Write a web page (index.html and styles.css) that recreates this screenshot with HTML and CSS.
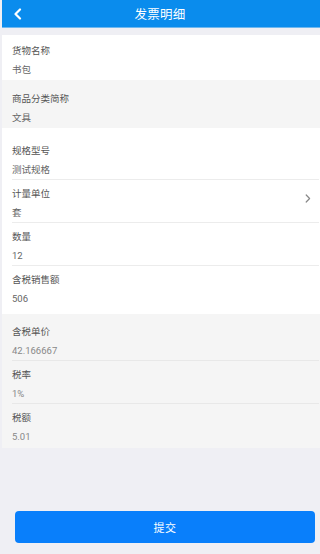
FILE: index.html
```html
<!DOCTYPE html>
<html lang="zh-CN">
<head>
<meta charset="utf-8">
<title>发票明细</title>
<link rel="stylesheet" href="styles.css">
</head>
<body>
<div class="page">
  <header class="topbar">
    <span class="back">
      <svg width="10" height="12" viewBox="0 0 10 12"><path d="M7 1.5 L2.5 6 L7 10.5" fill="none" stroke="#fff" stroke-width="2.2" stroke-linecap="round" stroke-linejoin="round"/></svg>
    </span>
    <h1 class="title">发票明细</h1>
  </header>

  <section class="group group-a">
    <div class="row"><div class="label">货物名称</div><div class="value">书包</div></div>
  </section>

  <section class="group group-b">
    <div class="row"><div class="label">商品分类简称</div><div class="value">文具</div></div>
  </section>

  <section class="group group-c">
    <div class="row"><div class="label">规格型号</div><div class="value">测试规格</div></div>
    <div class="row row-link">
      <div class="row-text"><div class="label">计量单位</div><div class="value">套</div></div>
      <svg class="chev" width="6" height="9" viewBox="0 0 6 9"><path d="M1.2 1 L4.6 4.5 L1.2 8" fill="none" stroke="#888" stroke-width="1.2" stroke-linecap="round" stroke-linejoin="round"/></svg>
    </div>
    <div class="row"><div class="label">数量</div><div class="value">12</div></div>
    <div class="row"><div class="label">含税销售额</div><div class="value">506</div></div>
  </section>

  <section class="group group-d">
    <div class="row"><div class="label">含税单价</div><div class="value muted">42.166667</div></div>
    <div class="row"><div class="label">税率</div><div class="value muted">1%</div></div>
    <div class="row"><div class="label">税额</div><div class="value muted">5.01</div></div>
  </section>

  <div class="footer">
    <button class="submit">提交</button>
  </div>
</div>
</body>
</html>
```

FILE: styles.css
```css
html, body {
  margin: 0;
  padding: 0;
  background: #efeff4;
  font-family: Roboto, "Noto Sans CJK SC", "Noto Sans", sans-serif;
}
.page {
  height: 554px;
  margin-left: 2px;
  display: flex;
  flex-direction: column;
  background: #efeff4;
}
.topbar {
  height: 28px;
  flex: none;
  background: #0a8ced;
  border-bottom: 1px solid #6fb8ef;
  box-sizing: border-box;
  display: flex;
  align-items: center;
  justify-content: center;
  position: relative;
}
.back {
  position: absolute;
  left: 11px;
  top: 8px;
  display: flex;
}
.title {
  margin: 0 0 0 -2px;
  color: #fff;
  font-size: 12.5px;
  font-weight: 400;
  letter-spacing: 0.3px;
}
.group {
  background: #fff;
  padding: 0 0 0 10px;
}
.group-a { margin-top: 7px; padding-top: 2px; }
.group-b { background: #f5f5f5; padding-top: 5px; }
.group-c { padding-top: 9px; padding-bottom: 5px; }
.group-d { background: #f5f5f5; padding-top: 4px; padding-bottom: 1px; }
.row {
  padding: 7px 0 3px;
  border-bottom: 1px solid #ececec;
  margin-right: 1px;
}
.group-c .row, .group-d .row { padding-bottom: 2px; }
.group-d .row { border-bottom-color: #e8e8e8; }
.row:last-child, .group-a .row, .group-b .row { border-bottom: none; }
.group-c .row:last-child, .group-d .row:last-child { padding-bottom: 3px; }
.row-link {
  display: flex;
  align-items: center;
}
.row-text { flex: 1; }
.chev { margin-right: 8px; margin-top: -10px; }
.label {
  font-size: 9.5px;
  line-height: 14px;
  color: #555;
}
.value {
  margin-top: 5px;
  font-size: 9.5px;
  line-height: 14px;
  color: #666;
}
.value.muted { color: #888; }
.footer {
  flex: 1;
  display: flex;
  align-items: flex-end;
  padding: 0 5px 11px 13px;
}
.submit {
  width: 100%;
  height: 32px;
  border: none;
  border-radius: 4px;
  background: #097ffb;
  color: #fff;
  font-family: inherit;
  font-size: 11px;
  letter-spacing: 0.5px;
}
```
